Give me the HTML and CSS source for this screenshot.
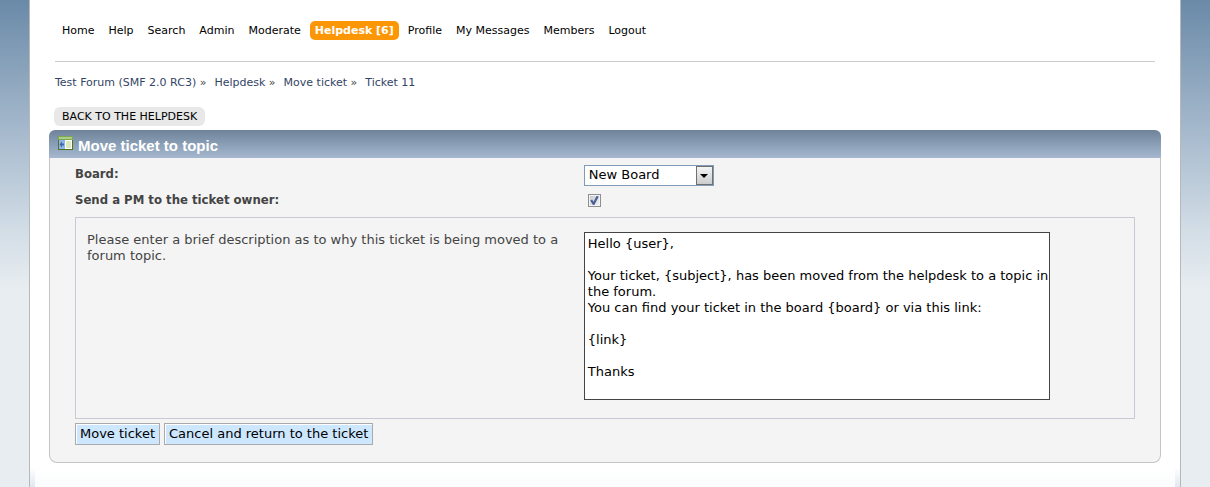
FILE: index.html
```html
<!DOCTYPE html>
<html lang="en">
<head>
    <meta charset="UTF-8">
    <meta name="viewport" content="width=device-width, initial-scale=1.0">
    <title>Move ticket to topic</title>
    <link rel="stylesheet" href="styles.css">
</head>
<body>

<div class="wrapper">
    <div class="content">

        <nav class="main-menu">
            <ul>
                <li><a href="#">Home</a></li>
                <li><a href="#">Help</a></li>
                <li><a href="#">Search</a></li>
                <li><a href="#">Admin</a></li>
                <li><a href="#">Moderate</a></li>
                <li><a href="#" class="active">Helpdesk [6]</a></li>
                <li><a href="#">Profile</a></li>
                <li><a href="#">My Messages</a></li>
                <li><a href="#">Members</a></li>
                <li><a href="#">Logout</a></li>
            </ul>
        </nav>

        <ul class="linktree">
            <li><a href="#">Test Forum (SMF 2.0 RC3)</a> »</li>
            <li><a href="#">Helpdesk</a> »</li>
            <li><a href="#">Move ticket</a> »</li>
            <li><a href="#">Ticket 11</a></li>
        </ul>

        <a href="#" class="back-button">BACK TO THE HELPDESK</a>

        <div class="panel">
            <h3 class="panel-title">
                <svg class="title-icon" width="16" height="16" viewBox="0 0 16 16" aria-hidden="true">
                    <rect x="0" y="1" width="15" height="14" fill="#4f7524"/>
                    <rect x="0" y="1" width="15" height="4" fill="#7fa650"/>
                    <rect x="1" y="2" width="13" height="2" fill="#a9cf8b"/>
                    <rect x="1" y="5" width="6" height="9" fill="#8db4e6"/>
                    <rect x="7" y="5" width="7" height="9" fill="#fff"/>
                    <rect x="8" y="6" width="5" height="7" fill="#dbe8b8"/>
                    <path d="M1.500 9.500L4 6.500V8.500H6V10.500H4V12.500Z" fill="#3f68b0"/>
                </svg>
                Move ticket to topic
            </h3>

            <!-- move form -->
            <form class="panel-body">
                <div class="row">
                    <label for="board" class="row-label">Board:</label>
                    <div class="select-box">
                        <select id="board">
                            <option>New Board</option>
                        </select>
                        <span class="select-arrow"></span>
                    </div>
                </div>
                <div class="row">
                    <label for="send-pm" class="row-label">Send a PM to the ticket owner:</label>
                    <div>
                        <input type="checkbox" id="send-pm" class="check" checked>
                    </div>
                </div>

                <div class="message-box">
                    <label for="message" class="message-label">Please enter a brief description as to why this ticket is being moved to a forum topic.</label>
                    <textarea id="message" rows="10">Hello {user},

Your ticket, {subject}, has been moved from the helpdesk to a topic in the forum.
You can find your ticket in the board {board} or via this link:

{link}

Thanks</textarea>
                </div>

                <div class="buttons">
                    <button type="submit">Move ticket</button>
                    <button type="button">Cancel and return to the ticket</button>
                </div>
            </form>
        </div>

    </div>
    <div class="footer"></div>
</div>

</body>
</html>
```

FILE: styles.css
```css
* {
    box-sizing: border-box;
}
body {
    margin: 0;
    font-family: Verdana, "DejaVu Sans", sans-serif;
    font-size: 13px;
    line-height: 16px;
    color: #444;
    background: #e8edf1 linear-gradient(#6a8aa8, #a3b7cb 125px, #d2dde6 230px, #e8edf1 290px) no-repeat;
}
ul {
    list-style: none;
    margin: 0;
    padding: 0;
}
a {
    color: #346;
    text-decoration: none;
}

.wrapper {
    display: flex;
    flex-direction: column;
    min-height: 100vh;
    margin: 0 29px;
    background: #fff;
    border: solid #b8b8b8;
    border-width: 0 1px;
}
.content {
    padding: 21px 19px 5px;
}

/* menu */
.main-menu {
    margin: 0 6px;
    padding: 0 2px 21px;
    border-bottom: 1px solid #ccc;
}
.main-menu ul {
    display: flex;
    gap: 4px;
    font-size: 11px;
}
.main-menu a {
    display: block;
    padding: 0 5px;
    line-height: 19px;
    color: #000;
    border-radius: 5px;
}
.main-menu .active {
    color: #fff;
    font-weight: bold;
    background: #fd9604;
}

.linktree {
    display: flex;
    gap: 8px;
    margin: 13px 6px 16px;
    font-size: 11px;
}

.back-button {
    display: block;
    width: fit-content;
    margin: 0 5px 4px;
    padding: 0 8px;
    font-size: 11px;
    line-height: 19px;
    color: #000;
    background: #e8e8e8;
    border-radius: 6px;
}

/* panel */
.panel-title {
    display: flex;
    align-items: center;
    gap: 4px;
    height: 28px;
    margin: 0;
    padding: 3px 9px 0;
    font: bold 15px/20px Arial, "Liberation Sans", sans-serif;
    color: #fff;
    background: linear-gradient(#6e839a, #a5b8d0);
    border-radius: 6px 6px 0 0;
}
.title-icon {
    margin-bottom: 6px;
}
.panel-body {
    padding: 7px 25px 17px;
    background: #f4f4f4;
    border: 1px solid #c4c4c4;
    border-top: 0;
    border-radius: 0 0 8px 8px;
}
.row {
    display: grid;
    grid-template-columns: 48% 1fr;
    min-height: 26px;
}
.row-label {
    padding-top: 1px;
    font-family: "DejaVu Sans Condensed", "DejaVu Sans", sans-serif;
    font-weight: bold;
}

.select-box {
    position: relative;
    width: 130px;
    height: 21px;
}
.select-box select {
    appearance: none;
    width: 100%;
    height: 100%;
    padding: 0 20px 2px 4px;
    font: inherit;
    color: #000;
    background: #fff;
    border: 1px solid #7f9db9;
    border-radius: 0;
}
.select-arrow {
    position: absolute;
    top: 1px;
    right: 1px;
    display: flex;
    align-items: center;
    justify-content: center;
    width: 17px;
    height: 19px;
    background: linear-gradient(#f4f4f4, #ccc);
    border: 1px solid #707070;
    pointer-events: none;
}
.select-arrow::before {
    content: "";
    border: 4px solid transparent;
    border-top-color: #000;
    border-bottom: 0;
}

.check {
    appearance: none;
    display: block;
    width: 13px;
    height: 13px;
    margin: 3px 4px;
    padding: 1px;
    background: #f4f4f4;
    border: 1px solid #8e8f8f;
}
.check:checked {
    background: linear-gradient(135deg, #c4c8ce, #f4f4f4);
    box-shadow: inset 0 0 0 1px #f4f4f4;
}
.check:checked::before {
    content: "";
    display: block;
    height: 9px;
    background: #4a5f97;
    clip-path: polygon(5% 50%, 25% 40%, 42% 65%, 75% 0, 100% 5%, 50% 100%, 35% 100%);
}

.message-box {
    display: grid;
    grid-template-columns: 48% 1fr;
    align-items: start;
    padding: 14px 12px 18px 11px;
    border: 1px solid #c9c9d6;
}
.message-label {
    padding-right: 24px;
}
.message-box textarea {
    width: 466px;
    max-width: 100%;
    padding: 3px 0 3px 3px;
    font: inherit;
    color: #000;
    background: #fff;
    border: 1px solid #444;
    border-radius: 0;
    overflow: auto;
    resize: none;
}

.buttons {
    display: flex;
    gap: 4px;
    margin-top: 4px;
}
.buttons button {
    height: 22px;
    padding: 0 4px;
    font: inherit;
    color: #000;
    background: #cde7ff;
    border: 1px solid #aaa;
    box-shadow: inset 1px 1px #fff;
}

/* soft shading under the content */
.footer {
    flex: 1;
    border: solid #fff;
    border-width: 0 5px;
    border-image: linear-gradient(#fff, #dfe7f0) 1;
    background: linear-gradient(#fff, #fafcfd);
}
```
